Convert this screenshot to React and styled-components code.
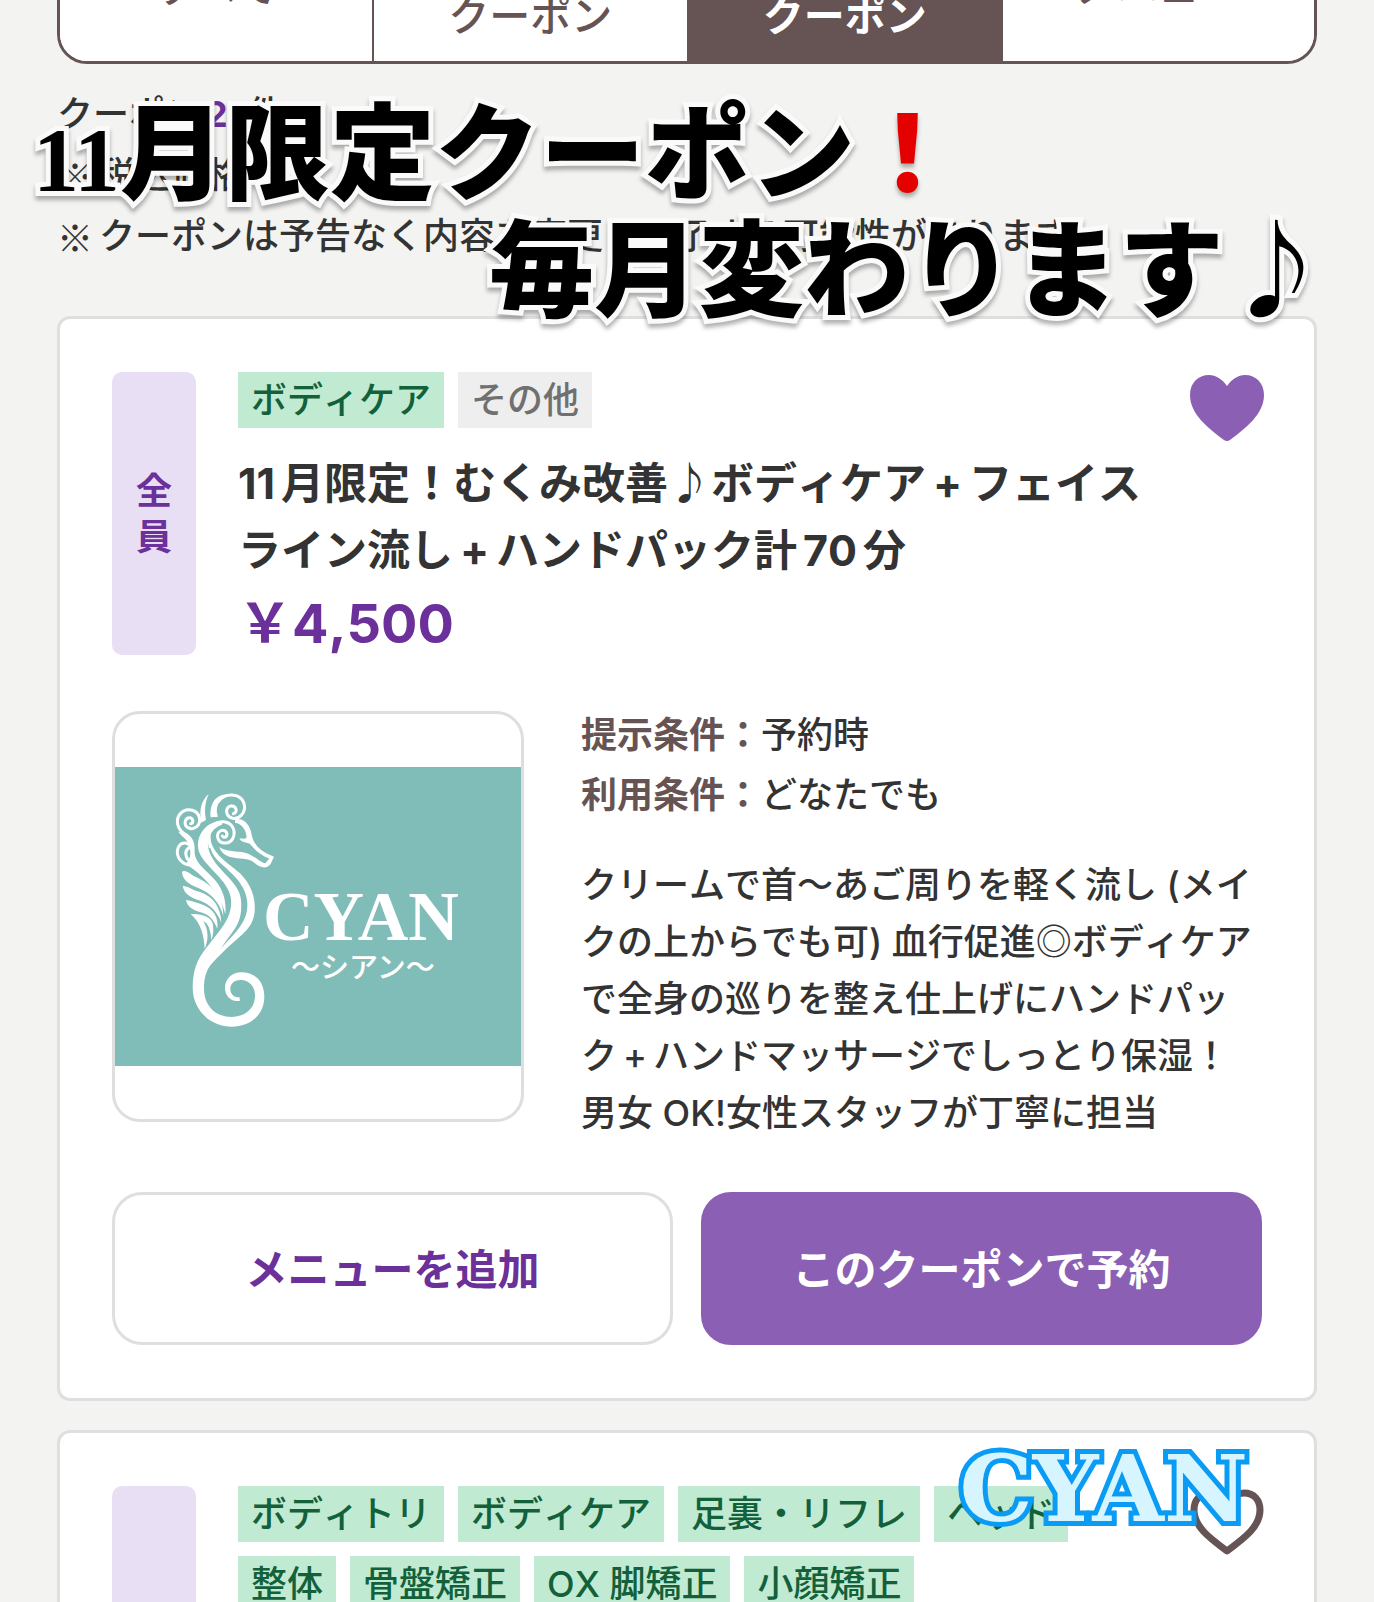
import React, { useState } from "react";
import styled, { createGlobalStyle } from "styled-components";

const GlobalStyle = createGlobalStyle`
  * {
    box-sizing: border-box;
  }
  body {
    margin: 0;
    background: #f3f3f1;
    color: #333;
    font-family: Inter, "Noto Sans CJK JP", sans-serif;
    font-size: 36px;
    font-weight: 500;
    font-kerning: none;
  }
  h1, h2, p, ul, dl, dd {
    margin: 0;
    padding: 0;
  }
  button {
    font-family: inherit;
    font-kerning: none;
    cursor: pointer;
  }
`;
const Page = styled.div`
  position: relative;
  height: 100vh;
  overflow: hidden;
  padding: 0 57px;
`;
const TabBar = styled.nav`
  display: grid;
  grid-template-columns: repeat(4, 1fr);
  height: 154px;
  margin-top: -90px;
  border: 3px solid #665353;
  border-radius: 30px;
  background: #fff;
  overflow: hidden;
`;
const Tab = styled.button`
  padding: 0;
  border: 0 solid #665353;
  background: ${({ $active }) => ($active ? "#665353" : "#fff")};
  color: ${({ $active }) => ($active ? "#fff" : "#665353")};
  font-size: 41px;
  font-weight: ${({ $active }) => ($active ? 700 : 500)};
  line-height: 58px;
  white-space: pre-line;
  &:first-child {
    border-right-width: 2px;
  }
  &:nth-child(n + 3) {
    border-left-width: 2px;
  }
`;
const Notes = styled.section`
  margin-top: 20px;
  height: 232px;
  line-height: 61px;
`;
const Count = styled.strong`
  margin: 0 4px;
  color: #6b3099;
  font-weight: 700;
`;
const NoteLine = styled.p`
  display: flex;
  gap: 6px;
  white-space: nowrap;
`;
const NoteMark = styled.span`
  font-family: "Noto Sans CJK JP", sans-serif;
  font-weight: 400;
`;
const Headline = styled.h1`
  position: absolute;
  top: 87px;
  left: 33px;
  right: 45px;
  color: #000;
  font-family: "Noto Sans CJK JP", sans-serif;
  font-size: 105px;
  font-weight: 900;
  font-kerning: auto;
  line-height: 117px;
  white-space: nowrap;
  paint-order: stroke fill;
  -webkit-text-stroke: 10px #fafafa;
  stroke-linejoin: round;
  filter: drop-shadow(0 4px 2px rgba(0, 0, 0, 0.3));
  pointer-events: none;
  z-index: 1;
`;
const HeadlineRow = styled.span`
  display: block;
  height: 117px;
  text-align: ${({ $end }) => ($end ? "right" : "left")};
`;
const SerifDigits = styled.span`
  font-family: "Liberation Serif", serif;
  font-size: 92px;
  font-weight: 700;
  line-height: 1;
`;
const RedMark = styled.span`
  color: #e50000;
  -webkit-text-stroke: 0;
`;
const CardList = styled.main`
  display: flex;
  flex-direction: column;
  gap: 29px;
`;
const Card = styled.article`
  padding: 53px 52px;
  border: 3px solid #dfdfdf;
  border-radius: 13px;
  background: #fff;
`;
const CardHead = styled.header`
  display: grid;
  grid-template-columns: 84px minmax(0, 1fr) 74px;
  column-gap: 42px;
  min-height: 283px;
`;
const Target = styled.div`
  display: flex;
  align-items: center;
  justify-content: center;
  border-radius: 10px;
  background: #e9dff4;
  color: #6b3099;
  font-weight: 700;
  line-height: 46px;
  span {
    width: 36px;
  }
`;
const Summary = styled.div`
  margin-right: -28px;
`;
const TagList = styled.ul`
  display: flex;
  flex-wrap: wrap;
  gap: 14px;
  list-style: none;
`;
const Tag = styled.li`
  padding: 0 13px;
  background: ${({ $muted }) => ($muted ? "#eee" : "#c1ead2")};
  color: ${({ $muted }) => ($muted ? "#707070" : "#12613a")};
  line-height: 56px;
`;
const Title = styled.h2`
  margin-top: 22px;
  font-size: 43px;
  font-weight: 700;
  line-height: 67px;
`;
const Num = styled.span`
  margin: 0 6px;
  &:first-child {
    margin-left: 0;
  }
`;
const Plus = styled.span`
  display: inline-block;
  width: 1em;
  text-align: center;
`;
const Price = styled.p`
  margin-bottom: -8px;
  color: #6b3099;
  font-size: 54px;
  font-weight: 700;
  line-height: 79px;
`;
const HeartButton = styled.button`
  justify-self: end;
  align-self: start;
  width: 74px;
  height: 69px;
  margin-right: -2px;
  padding: 3px 0 0;
  border: none;
  background: none;
  svg {
    display: block;
    width: 74px;
    height: 66px;
  }
`;
const CardBody = styled.div`
  display: grid;
  grid-template-columns: 412px minmax(0, 1fr);
  align-items: start;
  column-gap: 57px;
  margin-top: 56px;
`;
const Photo = styled.div`
  display: flex;
  align-items: center;
  height: 411px;
  border: 3px solid #dedede;
  border-radius: 28px;
  background: #fff;
  font-kerning: auto;
  overflow: hidden;
  svg {
    width: 100%;
    height: 299px;
    background: #81bdb8;
  }
`;
const Conditions = styled.dl`
  display: grid;
  row-gap: 16px;
  padding-top: 2px;
  line-height: 44px;
  div {
    display: flex;
  }
  dt {
    color: #665353;
    font-weight: 700;
  }
`;
const Description = styled.p`
  margin-top: 40px;
  line-height: 57px;
`;
const Actions = styled.div`
  display: grid;
  grid-template-columns: 1fr 1fr;
  gap: 28px;
  margin-top: 50px;
`;
const ActionButton = styled.button`
  height: 153px;
  padding-bottom: 6px;
  border: 3px solid ${({ $primary }) => ($primary ? "#8b60b4" : "#dfdfdf")};
  border-radius: 30px;
  background: ${({ $primary }) => ($primary ? "#8b60b4" : "#fff")};
  color: ${({ $primary }) => ($primary ? "#fff" : "#6b3099")};
  font-size: 42px;
  font-weight: 700;
`;
const ShopStamp = styled.div`
  position: absolute;
  top: 1431px;
  right: 126px;
  color: #d6f5ff;
  font-family: "DejaVu Serif", serif;
  font-size: 92px;
  font-weight: 700;
  font-kerning: auto;
  line-height: 116px;
  paint-order: stroke fill;
  -webkit-text-stroke: 10px #0a9bf5;
  stroke-linejoin: round;
  pointer-events: none;
`;

const tabList = ["すべて", "新規\nクーポン", "再来\nクーポン", "メニュー"];
const couponTags = [
  { name: "ボディケア" },
  { name: "その他", muted: true },
];
const nextCouponTags = [
  { name: "ボディトリ" },
  { name: "ボディケア" },
  { name: "足裏・リフレ" },
  { name: "ヘッド" },
  { name: "整体" },
  { name: "骨盤矯正" },
  { name: "OX 脚矯正" },
  { name: "小顔矯正" },
];

const Heart = ({ filled }) => (
  <svg viewBox="0 0 74 66" aria-hidden="true">
    {filled ? (
      <path
        d="M37 11C32 4 26 0 19 0 8 0 0 8 0 20c0 19 18 33 34 45q3 2 6 0c16-12 34-26 34-45C74 8 66 0 55 0 48 0 42 4 37 11z"
        fill="#8b60b4"
      />
    ) : (
      <path
        d="M37 14C32 7 27 4 20 4 10 4 4 11 4 21c0 16 14 27 33 41 19-14 33-25 33-41C70 11 64 4 54 4 47 4 42 7 37 14z"
        fill="none"
        stroke="#665353"
        strokeWidth="7"
        strokeLinejoin="round"
      />
    )}
  </svg>
);

const ShopLogo = () => (
  <svg viewBox="0 0 406 299" role="img" aria-label="CYAN">
    <g transform="translate(45 13) scale(0.3333)" fill="#fff">
      {/* body and tail */}
      <path d="M186 122C140 125 112 160 114 200C116 250 200 290 212 350C222 410 180 450 150 490C120 525 98 560 98 622C98 690 150 740 215 740C270 740 313 705 313 650C313 605 285 577 245 577C212 577 193 602 195 628C197 652 218 668 240 662L238 651C222 655 209 640 211 624C213 606 228 598 246 600C270 603 287 622 285 652C282 690 252 711 215 711C168 711 132 680 132 625C132 560 165 535 200 480C230 440 248 420 243 360C238 300 160 270 145 205C138 170 160 142 186 134Z" />
      <path d="M150 165C152 220 200 245 240 280C270 310 288 350 284 395C278 450 240 465 190 515C160 545 145 558 136 584C134 550 165 525 195 492C235 450 264 420 262 370C260 315 215 280 182 250C150 222 144 190 150 165Z" />
      <path d="M55 155C92 158 106 178 104 215C104 250 140 270 165 300C190 330 200 365 196 402C182 350 150 310 115 280C98 266 85 258 78 250C98 235 96 190 66 168Z" />
      {/* fins */}
      <path d="M66 275C80 268 90 285 115 295C160 318 190 350 190 408C178 364 150 338 115 324C85 312 68 300 66 275Z" />
      <path d="M68 318C85 318 95 330 120 336C160 350 182 380 184 428C170 388 140 368 115 360C90 352 72 340 68 318Z" />
      <path d="M78 360C95 362 110 368 130 375C160 388 176 410 172 446C160 414 140 400 120 396C98 390 82 380 78 360Z" />
      <path d="M92 402C115 402 150 405 158 430C162 450 160 465 154 480C152 450 145 430 130 424C146 450 146 480 134 506C132 470 125 430 92 402Z" />
      {/* crest */}
      <path d="M146 42C125 60 116 90 124 128L138 120C133 95 134 70 146 42Z" />
      <path d="M152 112C148 60 175 43 207 42C178 58 163 80 174 110Z" />
      {/* face */}
      <path d="M225 118C255 112 272 140 275 165C282 195 300 215 342 230L332 252C318 270 300 262 285 250C265 232 235 238 215 232C195 228 182 215 178 201C200 217 230 212 255 218C285 226 300 248 316 250L328 236C300 225 285 210 270 192C260 185 248 190 238 176C248 174 258 180 260 170C258 150 245 130 225 128Z" />
      <g fill="none" stroke="#fff" strokeWidth="9" strokeLinecap="round">
        <path d="M150 200C140 158 155 124 190 125C218 127 227 152 220 172C210 196 178 194 173 172C170 153 192 143 200 158C204 170 192 177 187 168" />
        <path d="M175 65C195 38 240 38 252 70C260 100 236 118 218 115C196 110 194 82 212 78C230 76 234 98 220 101" />
        <path d="M80 165C50 150 46 120 60 102C78 80 112 88 118 112C124 138 100 152 84 143C70 134 74 112 90 113C102 116 100 130 92 131" />
        <path d="M88 255C55 250 46 220 56 200C68 180 94 190 94 208C90 196 74 210 78 226C82 244 98 246 99 234" />
      </g>
    </g>
    <text
      x="148"
      y="173"
      fill="#fff"
      fontFamily="Liberation Serif, serif"
      fontSize="70"
      fontWeight="700"
    >
      CYAN
    </text>
    <text
      x="176"
      y="211"
      fill="#fff"
      fontFamily="Noto Sans CJK JP, sans-serif"
      fontSize="29"
      fontWeight="500"
    >
      〜シアン〜
    </text>
  </svg>
);

const Favorite = ({ initial }) => {
  const [liked, setLiked] = useState(initial);
  return (
    <HeartButton
      type="button"
      aria-label="お気に入り"
      aria-pressed={liked}
      onClick={() => setLiked(!liked)}
    >
      <Heart filled={liked} />
    </HeartButton>
  );
};

const Tags = ({ items }) => (
  <TagList>
    {items.map((tag) => (
      <Tag key={tag.name} $muted={tag.muted}>
        {tag.name}
      </Tag>
    ))}
  </TagList>
);

const App = () => {
  const [activeTab, setActiveTab] = useState(2);
  return (
    <Page>
      <GlobalStyle />
      <TabBar>
        {tabList.map((tab, index) => (
          <Tab
            key={index}
            type="button"
            $active={index === activeTab}
            onClick={() => setActiveTab(index)}
          >
            {tab}
          </Tab>
        ))}
      </TabBar>
      <Notes>
        <p>
          クーポン<Count>21</Count>件
        </p>
        <NoteLine>
          <NoteMark>※</NoteMark>
          <span>税込価格</span>
        </NoteLine>
        <NoteLine>
          <NoteMark>※</NoteMark>
          <span>クーポンは予告なく内容を変更・終了する可能性があります</span>
        </NoteLine>
      </Notes>
      <Headline>
        <HeadlineRow>
          <SerifDigits>11</SerifDigits>月限定クーポン<RedMark>！</RedMark>
        </HeadlineRow>
        <HeadlineRow $end>毎月変わります♪</HeadlineRow>
      </Headline>
      <CardList>
        <Card>
          <CardHead>
            <Target>
              <span>全員</span>
            </Target>
            <Summary>
              <Tags items={couponTags} />
              <Title>
                <Num>11</Num>月限定！むくみ改善♪ボディケア<Plus>+</Plus>
                フェイスライン流し<Plus>+</Plus>ハンドパック計<Num>70</Num>分
              </Title>
              <Price>￥4,500</Price>
            </Summary>
            <Favorite initial={true} />
          </CardHead>
          <CardBody>
            <Photo>
              <ShopLogo />
            </Photo>
            <div>
              <Conditions>
                <div>
                  <dt>提示条件：</dt>
                  <dd>予約時</dd>
                </div>
                <div>
                  <dt>利用条件：</dt>
                  <dd>どなたでも</dd>
                </div>
              </Conditions>
              <Description>
                クリームで首〜あご周りを軽く流し (メイクの上からでも可)
                血行促進◎ボディケアで全身の巡りを整え仕上げにハンドパック
                <Plus>+</Plus>
                ハンドマッサージでしっとり保湿！男女 OK!女性スタッフが丁寧に担当
              </Description>
            </div>
          </CardBody>
          <Actions>
            <ActionButton type="button">メニューを追加</ActionButton>
            <ActionButton type="button" $primary>
              このクーポンで予約
            </ActionButton>
          </Actions>
        </Card>
        <Card>
          <CardHead>
            <Target />
            <Summary>
              <Tags items={nextCouponTags} />
            </Summary>
            <Favorite initial={false} />
          </CardHead>
        </Card>
      </CardList>
      <ShopStamp>CYAN</ShopStamp>
    </Page>
  );
};
export default App;
